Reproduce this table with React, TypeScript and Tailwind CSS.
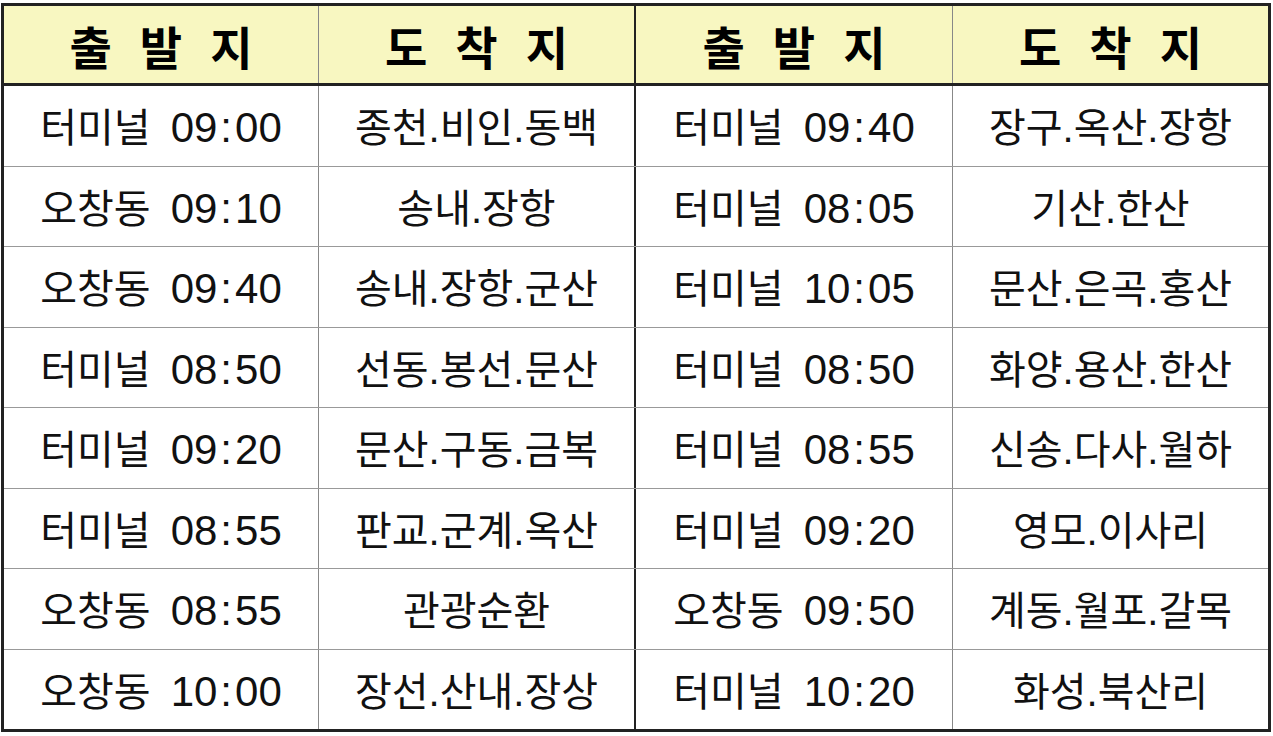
import React from "react";

const rows: [string, string, string, string, string, string][] = [
  ["터미널", "09:00", "종천.비인.동백", "터미널", "09:40", "장구.옥산.장항"],
  ["오창동", "09:10", "송내.장항", "터미널", "08:05", "기산.한산"],
  ["오창동", "09:40", "송내.장항.군산", "터미널", "10:05", "문산.은곡.홍산"],
  ["터미널", "08:50", "선동.봉선.문산", "터미널", "08:50", "화양.용산.한산"],
  ["터미널", "09:20", "문산.구동.금복", "터미널", "08:55", "신송.다사.월하"],
  ["터미널", "08:55", "판교.군계.옥산", "터미널", "09:20", "영모.이사리"],
  ["오창동", "08:55", "관광순환", "오창동", "09:50", "계동.월포.갈목"],
  ["오창동", "10:00", "장선.산내.장상", "터미널", "10:20", "화성.북산리"],
];

const font = { fontFamily: '"Liberation Sans", "Noto Sans CJK KR", sans-serif' };

function Head({ chars }: { chars: string[] }) {
  return (
    <div className="flex h-full items-center justify-center gap-[28px] text-[46px] font-bold text-black" style={{ fontFamily: '"Noto Sans CJK KR", sans-serif' }}>
      {chars.map((c, i) => (
        <span key={i} className="leading-none">{c}</span>
      ))}
    </div>
  );
}

function Time({ t }: { t: string }) {
  const [a, b] = t.split(":");
  return (
    <span className="flex items-center text-[42px] leading-none">
      <span>{a}</span>
      <span className="px-[3px]">:</span>
      <span>{b}</span>
    </span>
  );
}

function From({ place, time }: { place: string; time: string }) {
  return (
    <div className="flex h-full items-center justify-center gap-[20px] pt-[5px] text-[40px] text-[#111]">
      <span className="leading-none">{place}</span>
      <Time t={time} />
    </div>
  );
}

function To({ text }: { text: string }) {
  return (
    <div className="flex h-full items-center justify-center pt-[5px] text-[40px] text-[#111]">
      <span className="leading-none">{text}</span>
    </div>
  );
}

export default function App() {
  return (
    <div className="h-[736px] w-[1273px] bg-white pt-[3px] pl-[1px]" style={font}>
      <div className="flex h-[729px] w-[1270px] flex-col border-[3px] border-[#222] bg-white">
        <div className="grid h-[80px] shrink-0 grid-cols-[315px_317px_317px_315px] border-b-[3px] border-[#222] bg-[#f8f7c1]">
          <div className="border-r border-[#888]"><Head chars={["출", "발", "지"]} /></div>
          <div className="border-r-2 border-[#222]"><Head chars={["도", "착", "지"]} /></div>
          <div className="border-r border-[#888]"><Head chars={["출", "발", "지"]} /></div>
          <div><Head chars={["도", "착", "지"]} /></div>
        </div>
        <div className="flex flex-1 flex-col">
          {rows.map((r, i) => (
            <div
              key={i}
              className={`grid flex-1 grid-cols-[315px_317px_317px_315px] ${i > 0 ? "border-t border-[#999]" : ""}`}
            >
              <div className="border-r border-[#888]"><From place={r[0]} time={r[1]} /></div>
              <div className="border-r-2 border-[#222]"><To text={r[2]} /></div>
              <div className="border-r border-[#888]"><From place={r[3]} time={r[4]} /></div>
              <div><To text={r[5]} /></div>
            </div>
          ))}
        </div>
      </div>
    </div>
  );
}
